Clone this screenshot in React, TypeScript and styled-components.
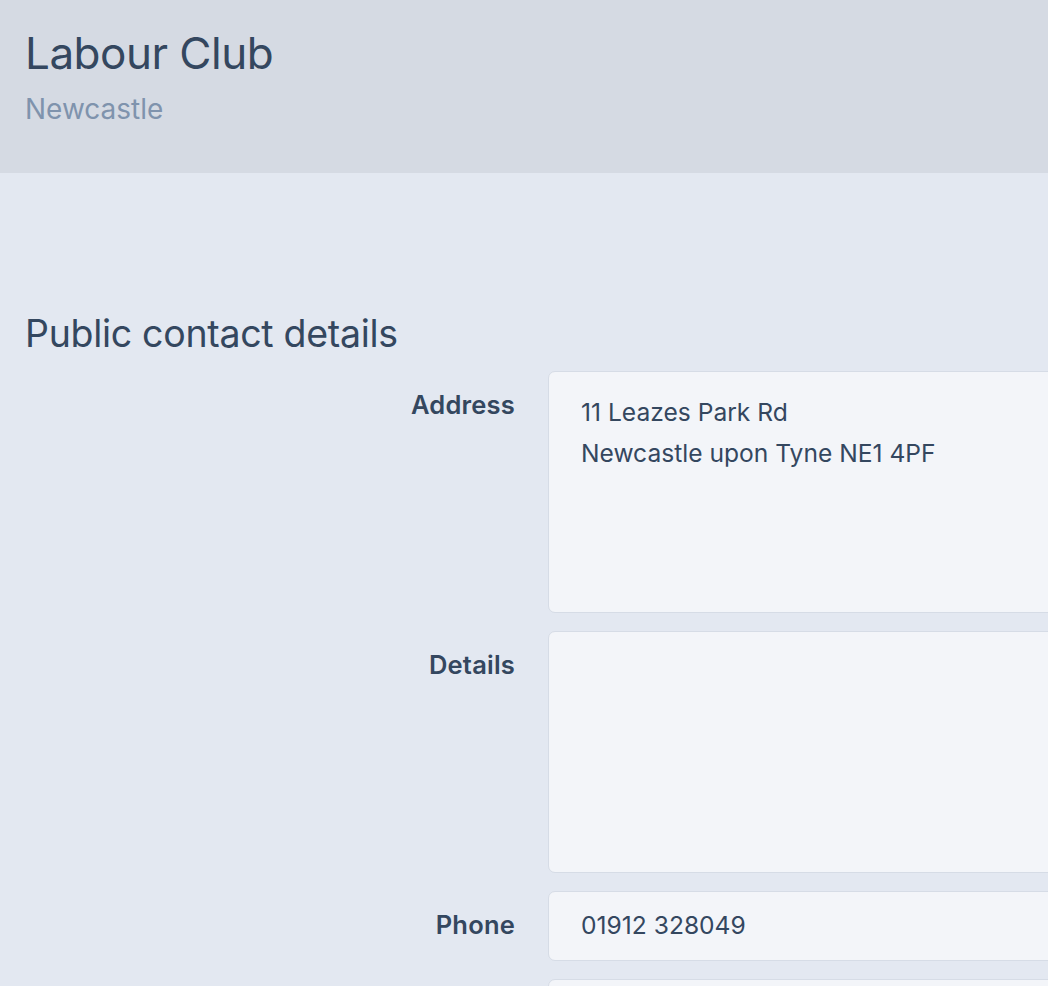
import React from 'react'
import styled, { createGlobalStyle } from 'styled-components'

const GlobalStyle = createGlobalStyle`
  html, body {
    margin: 0;
    padding: 0;
    background: #e3e8f1;
    font-family: Inter, 'Noto Sans', sans-serif;
    color: #34475f;
    overflow-x: hidden;
  }
`

const Header = styled.header`
  background: #d5dae3;
  height: 173px;
  box-sizing: border-box;
  padding: 26px 25px 0;
`

const Title = styled.h1`
  margin: 0;
  font-size: 44px;
  font-weight: 400;
  line-height: 54px;
  letter-spacing: -0.5px;
  color: #34475f;
`

const Subtitle = styled.div`
  margin-top: 12px;
  font-size: 28px;
  line-height: 34px;
  color: #7f93ad;
`

const Main = styled.main`
  padding: 138px 25px 0;
`

const SectionTitle = styled.h2`
  margin: 0 0 14px;
  font-size: 37.5px;
  font-weight: 400;
  line-height: 46px;
  letter-spacing: -0.3px;
  color: #34475f;
`

// label column on the left, wide input column running off the right edge
const Form = styled.div`
  display: grid;
  grid-template-columns: 490px 800px;
  column-gap: 33px;
  row-gap: 18px;
`

const Label = styled.label`
  text-align: right;
  font-size: 25.5px;
  font-weight: 600;
  line-height: 30px;
  padding-top: 19px;
  letter-spacing: 0.2px;
  color: #34475f;
`

const Field = styled.div<{ $height: number; $multiline?: boolean }>`
  box-sizing: border-box;
  height: ${({ $height }) => $height}px;
  background: #f3f5f9;
  border: 1.5px solid #d6dce6;
  border-radius: 7px;
  padding: ${({ $multiline }) => ($multiline ? '20px 32px' : '13px 32px')};
  font-size: 24.6px;
  line-height: 41px;
  color: #34475f;
  white-space: pre-line;
`

const App: React.FC = () => {
  return (
    <>
      <GlobalStyle />
      <Header>
        <Title>Labour Club</Title>
        <Subtitle>Newcastle</Subtitle>
      </Header>
      <Main>
        <SectionTitle>Public contact details</SectionTitle>
        <Form>
          <Label>Address</Label>
          <Field $height={242} $multiline>
            {'11 Leazes Park Rd\nNewcastle upon Tyne NE1 4PF'}
          </Field>
          <Label>Details</Label>
          <Field $height={242} $multiline />
          <Label>Phone</Label>
          <Field $height={70}>01912 328049</Field>
          <Label />
          <Field $height={70} />
        </Form>
      </Main>
    </>
  )
}

export default App
